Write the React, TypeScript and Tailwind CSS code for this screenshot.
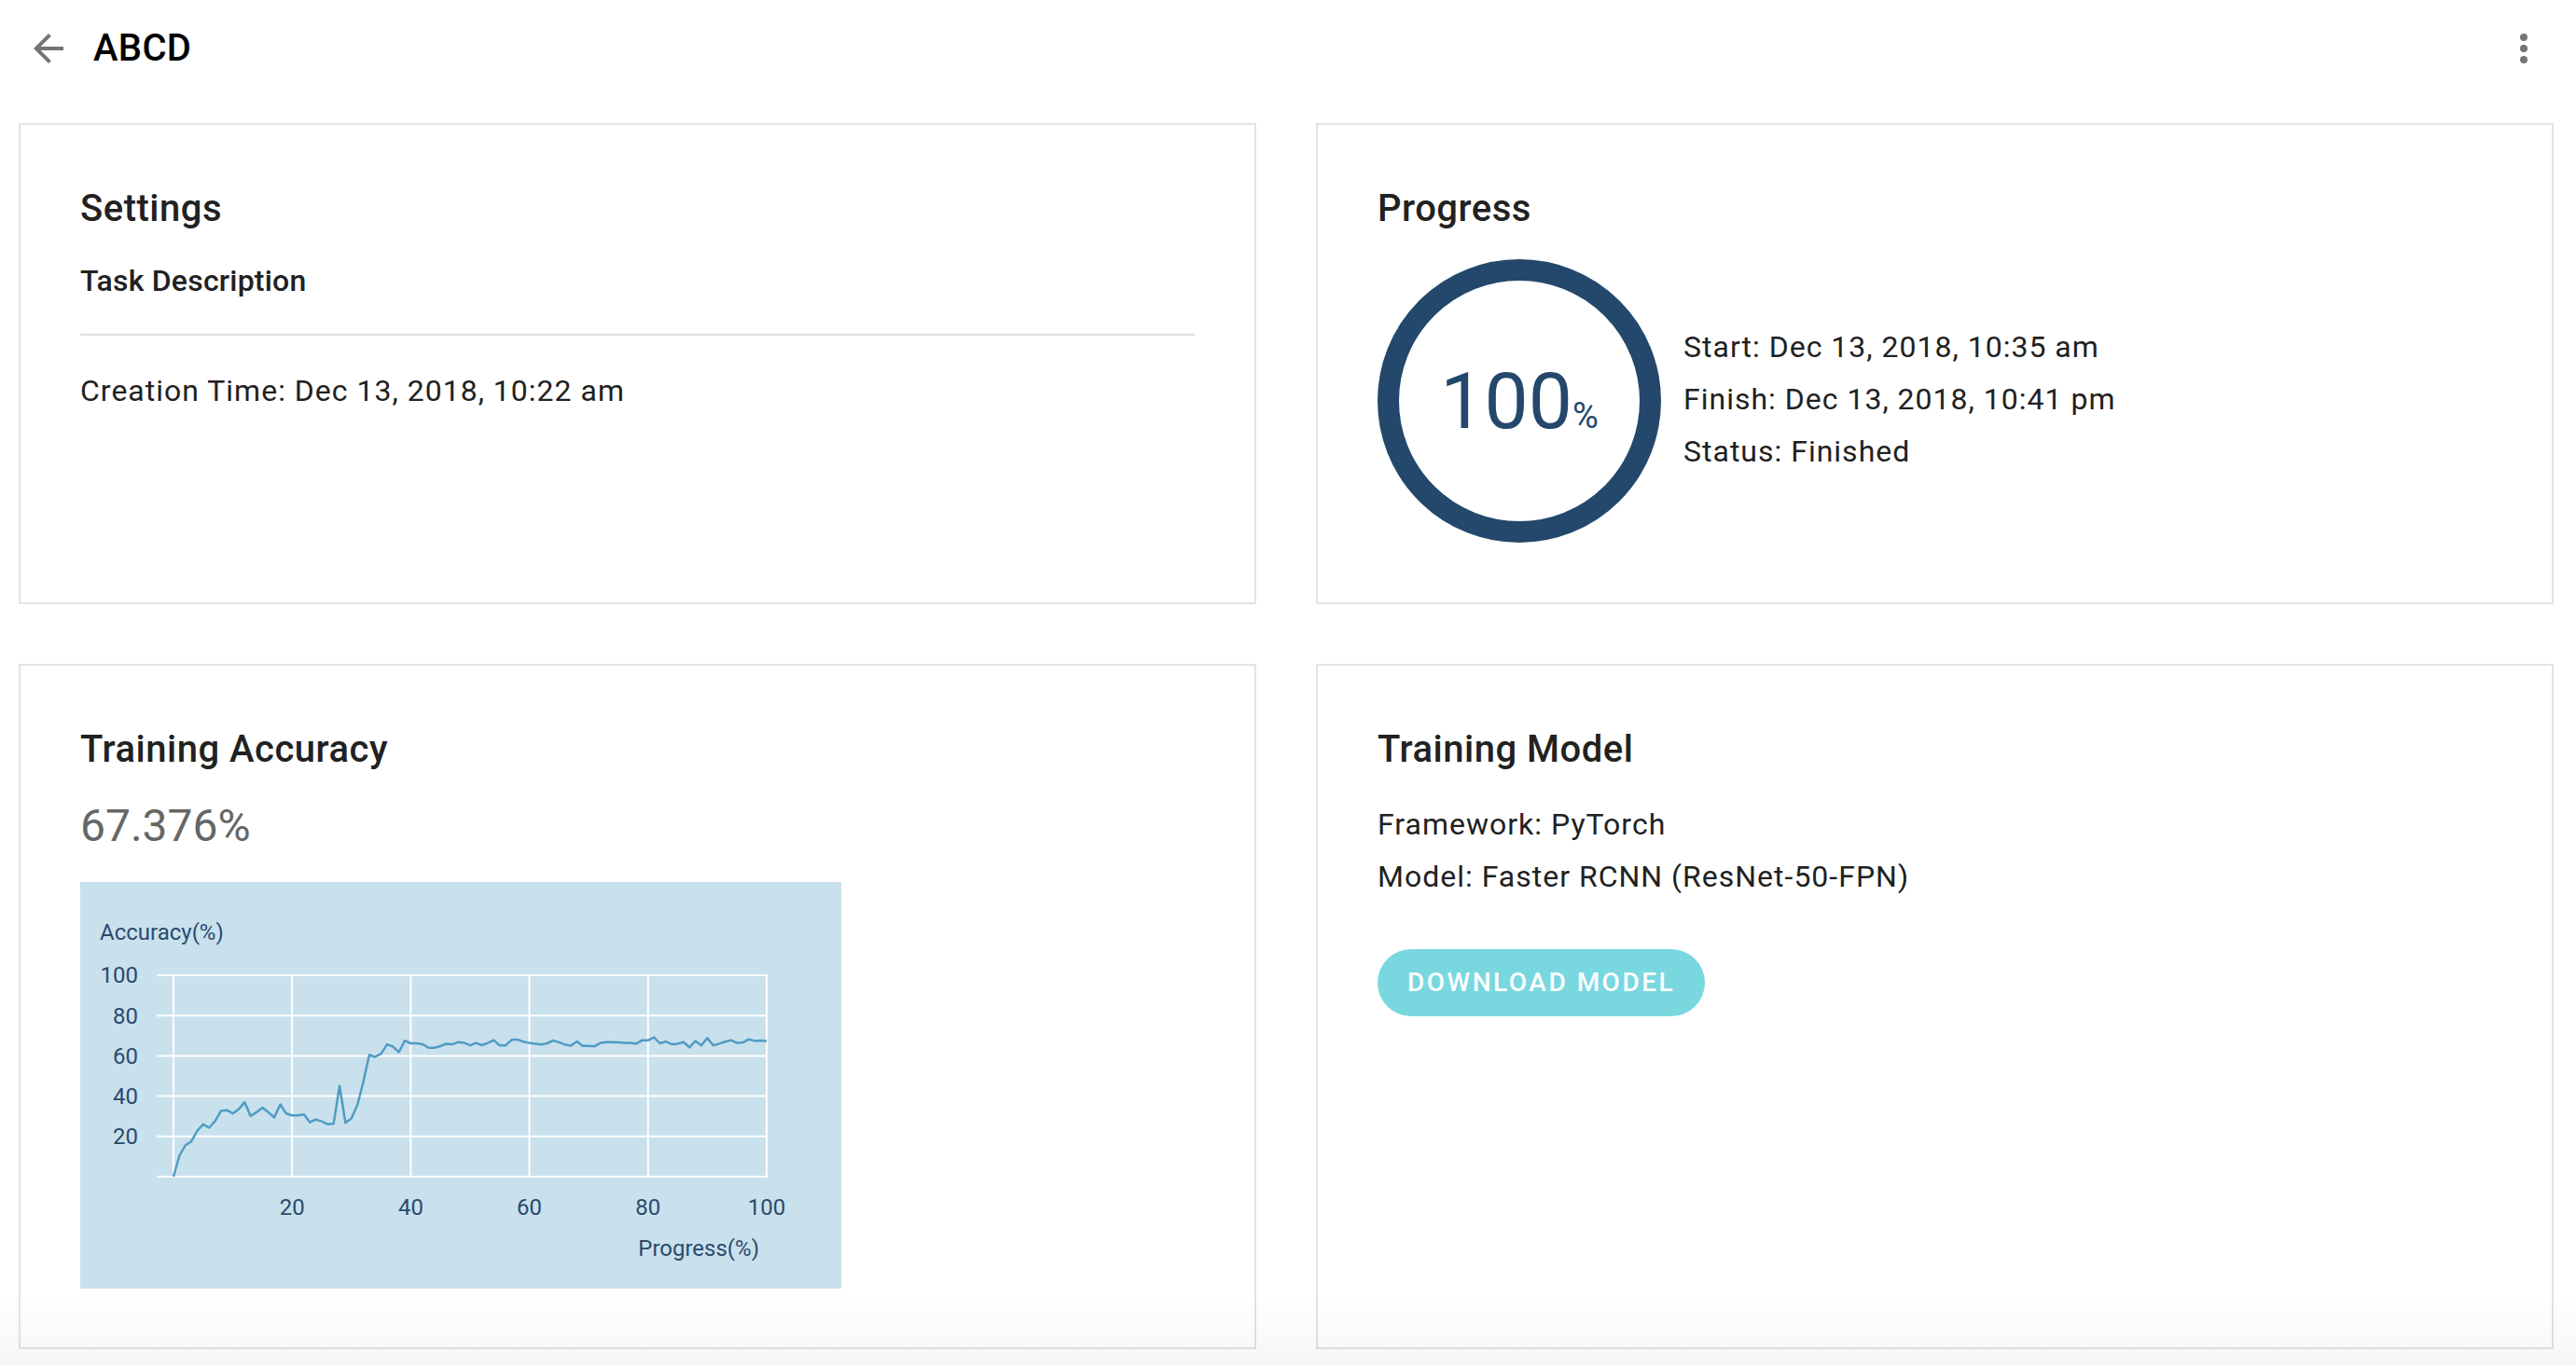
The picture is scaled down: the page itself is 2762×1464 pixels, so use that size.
import React from "react";

const accuracy = [
  0, 10.4, 15.5, 17.5, 22.7, 26, 24.3, 27.5, 32.6, 33, 31.4, 33.5, 37, 30.1, 32, 34.2, 32, 29.4, 35.9, 31.4,
  30.4, 30.4, 30.9, 27, 28.4, 27.5, 26, 26.3, 45.1, 26.7, 28.9, 35.5, 47, 60.4, 59.5, 61, 65.7, 64.6, 61.8, 67.5,
  66.2, 66.2, 65.8, 64, 64, 64.8, 66, 65.7, 66.8, 66.5, 65.2, 66.4, 65.3, 66.4, 67.8, 65.2, 65.2, 67.9, 68.1, 67,
  66.4, 66, 65.6, 66.2, 67.6, 66.7, 65.6, 65, 67.1, 64.9, 64.9, 64.7, 66.4, 66.8, 66.8, 66.6, 66.4, 66.4, 66, 67.7,
  67.7, 69.2, 66.2, 67.1, 65.8, 66, 66.8, 64.2, 67.4, 65.2, 68.8, 65.2, 66, 67, 67.8, 66.4, 66.6, 68.2, 67.4, 67.6,
  67.4,
];

const px = (p: number) => 100 + p * 6.36;
const py = (a: number) => 316 - a * 2.16;

function AccuracyChart() {
  const points = accuracy.map((a, i) => `${px(i).toFixed(1)},${py(a).toFixed(1)}`).join(" ");
  const ticks = [0, 20, 40, 60, 80, 100];

  return (
    <div className="mt-[32px] w-[816px] h-[436px] bg-[#c9e1ec]">
      <svg width="816" height="436" viewBox="0 0 816 436">
        {ticks.map((t) => (
          <line key={"h" + t} x1={82} x2={737} y1={py(t)} y2={py(t)} stroke="#ffffff" strokeWidth={2} />
        ))}
        {ticks.map((t) => (
          <line key={"v" + t} x1={px(t)} x2={px(t)} y1={100} y2={317} stroke="#ffffff" strokeWidth={2} />
        ))}
        <g fill="#2b4a6e" fontSize="24" fontFamily="Roboto, sans-serif">
          <text x={21} y={55.5} dominantBaseline="middle">
            Accuracy(%)
          </text>
          {ticks.slice(1).map((t) => (
            <text key={"yl" + t} x={62} y={py(t) + 2} textAnchor="end" dominantBaseline="middle">
              {t}
            </text>
          ))}
          {ticks.slice(1).map((t) => (
            <text key={"xl" + t} x={px(t)} y={350.5} textAnchor="middle" dominantBaseline="middle">
              {t}
            </text>
          ))}
          <text x={728} y={394.5} textAnchor="end" dominantBaseline="middle">
            Progress(%)
          </text>
        </g>
        <polyline points={points} fill="none" stroke="#4f9cc5" strokeWidth={2.5} strokeLinejoin="round" />
      </svg>
    </div>
  );
}

function Card({ children }: { children: React.ReactNode }) {
  return <div className="border-2 border-[#e3e3e3] bg-white p-[64px]">{children}</div>;
}

function CardTitle({ children }: { children: React.ReactNode }) {
  return (
    <h2 className="pt-[2px] text-[40px] leading-[48px] font-medium tracking-[0.5px] text-[#212121]">{children}</h2>
  );
}

export default function App() {
  return (
    <div className="relative min-h-screen bg-white font-['Roboto','Noto_Sans',sans-serif] text-[#212121]">
      <header className="h-[104px] flex items-center pl-[28px] pr-[32px]">
        <svg className="w-12 h-12 text-[#757575]" viewBox="0 0 24 24" fill="currentColor">
          <path d="M20 11H7.83l5.59-5.59L12 4l-8 8 8 8 1.41-1.41L7.83 13H20v-2z" />
        </svg>
        <h1 className="ml-[24px] text-[40px] leading-[48px] font-medium tracking-[0.3px] text-black">ABCD</h1>
        <svg className="ml-auto w-12 h-12 text-[#757575]" viewBox="0 0 24 24" fill="currentColor">
          <circle cx="12" cy="6" r="2" />
          <circle cx="12" cy="12" r="2" />
          <circle cx="12" cy="18" r="2" />
        </svg>
      </header>

      <main className="mt-[28px] pl-[20px] pr-[24px] grid grid-cols-2 grid-rows-[516px_735px] gap-[64px]">
        <Card>
          <CardTitle>Settings</CardTitle>
          <p className="mt-[30px] text-[32px] leading-[46px] font-medium tracking-[0.2px]">Task Description</p>
          <div className="mt-[34px] h-[2px] bg-[#e0e0e0]" />
          <p className="mt-[35px] text-[32px] leading-[48px] tracking-[1px]">Creation Time: Dec 13, 2018, 10:22 am</p>
        </Card>

        <Card>
          <CardTitle>Progress</CardTitle>
          <div className="mt-[30px] flex items-center gap-[24px]">
            <div className="w-[304px] h-[304px] shrink-0 rounded-full border-[23px] border-[#23486b] flex items-center justify-center text-[#23486b]">
              <div className="flex items-baseline pt-[2px]">
                <span className="text-[84px] leading-none">100</span>
                <span className="text-[38px] leading-none">%</span>
              </div>
            </div>
            <div className="pb-[4px] text-[32px] leading-[56px] tracking-[1px]">
              <p>Start: Dec 13, 2018, 10:35 am</p>
              <p>Finish: Dec 13, 2018, 10:41 pm</p>
              <p>Status: Finished</p>
            </div>
          </div>
        </Card>

        <Card>
          <CardTitle>Training Accuracy</CardTitle>
          <p className="mt-[30px] text-[48px] leading-[56px] text-[#666666]">67.376%</p>
          <AccuracyChart />
        </Card>

        <Card>
          <CardTitle>Training Model</CardTitle>
          <div className="mt-[28px] text-[32px] leading-[56px] tracking-[1px]">
            <p>Framework: PyTorch</p>
            <p>Model: Faster RCNN (ResNet-50-FPN)</p>
          </div>
          <button className="mt-[50px] h-[72px] px-[32px] rounded-full bg-[#79d7df] text-white text-[28px] font-medium tracking-[2.5px] uppercase">
            Download Model
          </button>
        </Card>
      </main>

      <div className="pointer-events-none absolute inset-x-0 bottom-0 h-[80px] bg-gradient-to-b from-black/0 to-black/[0.035]" />
    </div>
  );
}
